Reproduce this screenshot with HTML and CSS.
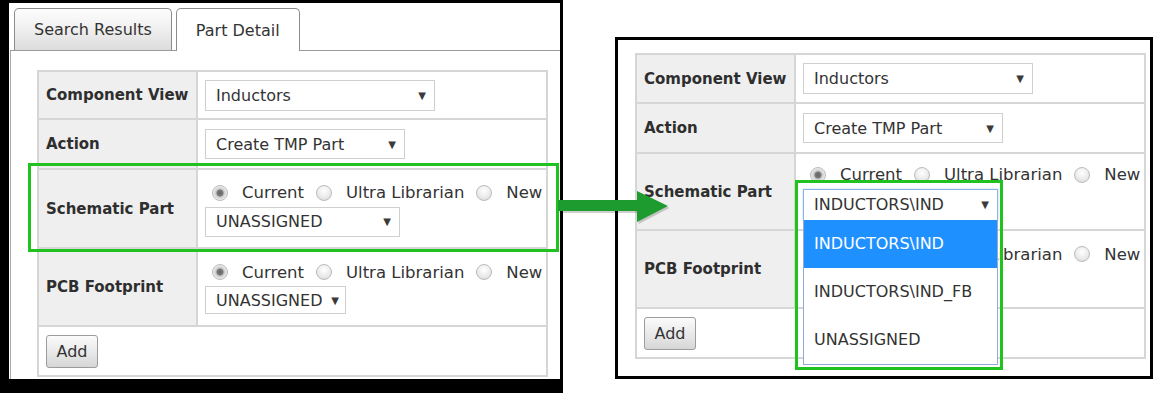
FILE: index.html
```html
<!DOCTYPE html>
<html lang="en">

<head>
    <meta charset="UTF-8">
    <title>Part Detail - Schematic Part</title>
    <link rel="stylesheet" href="styles.css">
</head>

<body>
    <!-- screenshot 1: the part detail tab -->
    <div class="shot shot-left">
        <div class="tabs">
            <div class="tab">Search Results</div>
            <div class="tab tab-active">Part Detail</div>
        </div>
        <div class="tab-body">
            <table class="form">
                <tr class="row-a">
                    <th>Component View</th>
                    <td><div class="select w-view"><span>Inductors</span><span class="caret">▼</span></div></td>
                </tr>
                <tr class="row-b">
                    <th>Action</th>
                    <td><div class="select w-action"><span>Create TMP Part</span><span class="caret">▼</span></div></td>
                </tr>
                <tr class="row-c">
                    <th>Schematic Part</th>
                    <td>
                        <div class="radios">
                            <span class="radio on"></span><span>Current</span>
                            <span class="radio"></span><span>Ultra Librarian</span>
                            <span class="radio"></span><span>New</span>
                        </div>
                        <div class="select w-part"><span>UNASSIGNED</span><span class="caret">▼</span></div>
                    </td>
                </tr>
                <tr class="row-d">
                    <th>PCB Footprint</th>
                    <td>
                        <div class="radios">
                            <span class="radio on"></span><span>Current</span>
                            <span class="radio"></span><span>Ultra Librarian</span>
                            <span class="radio"></span><span>New</span>
                        </div>
                        <div class="select w-foot"><span>UNASSIGNED</span><span class="caret">▼</span></div>
                    </td>
                </tr>
                <tr class="row-e">
                    <td colspan="2"><button class="btn">Add</button></td>
                </tr>
            </table>
        </div>
        <div class="hilite hilite-left"></div>
    </div>

    <!-- screenshot 2: the schematic part list opened -->
    <div class="shot shot-right">
        <table class="form">
            <tr class="row-a2">
                <th>Component View</th>
                <td><div class="select w-view"><span>Inductors</span><span class="caret">▼</span></div></td>
            </tr>
            <tr class="row-b">
                <th>Action</th>
                <td><div class="select w-action"><span>Create TMP Part</span><span class="caret">▼</span></div></td>
            </tr>
            <tr class="row-c2">
                <th>Schematic Part</th>
                <td>
                    <div class="radios">
                        <span class="radio on"></span><span>Current</span>
                        <span class="radio"></span><span>Ultra Librarian</span>
                        <span class="radio"></span><span>New</span>
                    </div>
                    <div class="select w-part focus"><span>INDUCTORS\IND</span><span class="caret">▼</span></div>
                </td>
            </tr>
            <tr class="row-d">
                <th>PCB Footprint</th>
                <td>
                    <!-- covered by the open list, only the right end shows -->
                    <div class="radios">
                        <span class="radio on covered"></span><span class="covered">Current</span>
                        <span class="radio covered"></span><span>Ultra Librarian</span>
                        <span class="radio"></span><span>New</span>
                    </div>
                    <div class="select w-foot covered"></div>
                </td>
            </tr>
            <tr class="row-e">
                <td colspan="2"><button class="btn">Add</button></td>
            </tr>
        </table>
        <ul class="options">
            <li class="picked">INDUCTORS\IND</li>
            <li>INDUCTORS\IND_FB</li>
            <li>UNASSIGNED</li>
        </ul>
        <div class="hilite hilite-right"></div>
    </div>

    <svg class="arrow" width="125" height="50" viewBox="0 0 125 50">
        <g fill="#000" opacity="0.18" transform="translate(1.5 2)">
            <rect x="8" y="18" width="82" height="11" />
            <polygon points="87,9 118,24 87,40" />
        </g>
        <g fill="#1e9b2f">
            <rect x="8" y="18" width="82" height="11" />
            <polygon points="87,9 118,24 87,40" />
        </g>
    </svg>
</body>

</html>
```

FILE: styles.css
```css
body {
    margin: 0;
    width: 1154px;
    height: 393px;
    display: flex;
    align-items: flex-start;
    position: relative;
    overflow: hidden;
    background-color: #fff;
    font-family: "DejaVu Sans", Verdana, sans-serif;
    font-size: 16px;
    color: #333;
}

.shot {
    position: relative;
    box-sizing: border-box;
    border: 3px solid #000;
    background-color: #fff;
}

.shot-left {
    width: 563px;
    height: 393px;
    border-left-width: 9px;
    border-bottom-width: 14px;
    padding-top: 5px;
    display: flex;
    flex-direction: column;
}

.shot-right {
    width: 538px;
    height: 342px;
    margin: 37px 0 0 52px;
    padding: 13px 0 0 17px;
}

/* tabs */

.tabs {
    display: flex;
    gap: 4px;
    margin-left: 5px;
}

.tab {
    box-sizing: border-box;
    height: 42px;
    padding: 0 19px;
    display: flex;
    align-items: center;
    border: 1px solid #8c8c8c;
    border-bottom: none;
    border-radius: 5px 5px 0 0;
    background: linear-gradient(#fdfdfd, #f1f1f1 45%, #dcdcdc);
}

.tab-active {
    height: 43px;
    margin-bottom: -1px;
    position: relative;
    z-index: 1;
    background: #fff;
}

.tab-body {
    flex: 1;
    margin-left: 1px;
    border-top: 1px solid #9a9a9a;
    border-left: 1px solid #a8a8a8;
    padding: 19px 0 0 26px;
}

/* form table */

.form {
    border-collapse: collapse;
    width: 511px;
    border: 2px solid #d6d6d6;
}

.form th,
.form td {
    border: 2px solid #d6d6d6;
    padding: 0 0 0 7px;
    text-align: left;
    vertical-align: middle;
}

.form th {
    width: 150px;
    background-color: #efefef;
    font-weight: bold;
    font-size: 15px;
    color: #2e2e2e;
}

.row-a { height: 48px; }
.row-a2 { height: 49px; }
.row-b { height: 50px; }
.row-c { height: 79px; }
.row-c2 { height: 77px; }
.row-d { height: 78px; }
.row-e { height: 50px; }

.select {
    box-sizing: border-box;
    display: flex;
    align-items: center;
    justify-content: space-between;
    height: 31px;
    padding: 0 8px 0 10px;
    border: 1px solid #cfcfcf;
    background-color: #fff;
    white-space: nowrap;
}

.caret {
    font-size: 10px;
    color: #3a3a3a;
}

.w-view { width: 230px; }
.w-action { width: 200px; height: 30px; }
.w-part { width: 195px; height: 30px; }
.w-foot { width: 141px; height: 28px; padding-right: 6px; }

.select.focus {
    height: 32px;
    border-color: #86b5e6;
    box-shadow: 0 0 2px #b5d3f3;
}

.covered {
    visibility: hidden;
}

.radios {
    display: flex;
    align-items: center;
    height: 24px;
    margin-bottom: 2px;
    font-size: 16.5px;
    white-space: nowrap;
}

.radio {
    box-sizing: border-box;
    width: 16px;
    height: 16px;
    margin: 0 14px 0 12px;
    border-radius: 50%;
    border: 1px solid #bcbcbc;
    background: radial-gradient(circle at 50% 35%, #fff, #e9e9e9 60%, #d4d4d4);
}

.radio:first-child {
    margin-left: 7px;
}

.radio.on {
    background: radial-gradient(circle, #666 0, #7a7a7a 3px, #c9c9c9 4px, #eee 7px);
}

.btn {
    width: 52px;
    height: 33px;
    border: 1px solid #9c9c9c;
    border-radius: 3px;
    background: linear-gradient(#fbfbfb, #e6e6e6 60%, #d6d6d6);
    font-family: inherit;
    font-size: 16px;
    color: #333;
}

/* opened list + highlight boxes */

.options {
    position: absolute;
    left: 185px;
    top: 180px;
    width: 195px;
    box-sizing: border-box;
    margin: 0;
    padding: 0;
    list-style: none;
    border: 1px solid #8faad6;
    border-top: none;
    background-color: #fff;
}

.options li {
    height: 48px;
    line-height: 48px;
    padding-left: 10px;
    white-space: nowrap;
}

.options .picked {
    background-color: #1e90ff;
    color: #fff;
}

.hilite {
    position: absolute;
    box-sizing: border-box;
    border: 3px solid #1fc21f;
}

.hilite-left {
    left: 19px;
    top: 160px;
    width: 531px;
    height: 89px;
}

.hilite-right {
    left: 177px;
    top: 140px;
    width: 208px;
    height: 190px;
}

.arrow {
    position: absolute;
    left: 550px;
    top: 182px;
}
```
